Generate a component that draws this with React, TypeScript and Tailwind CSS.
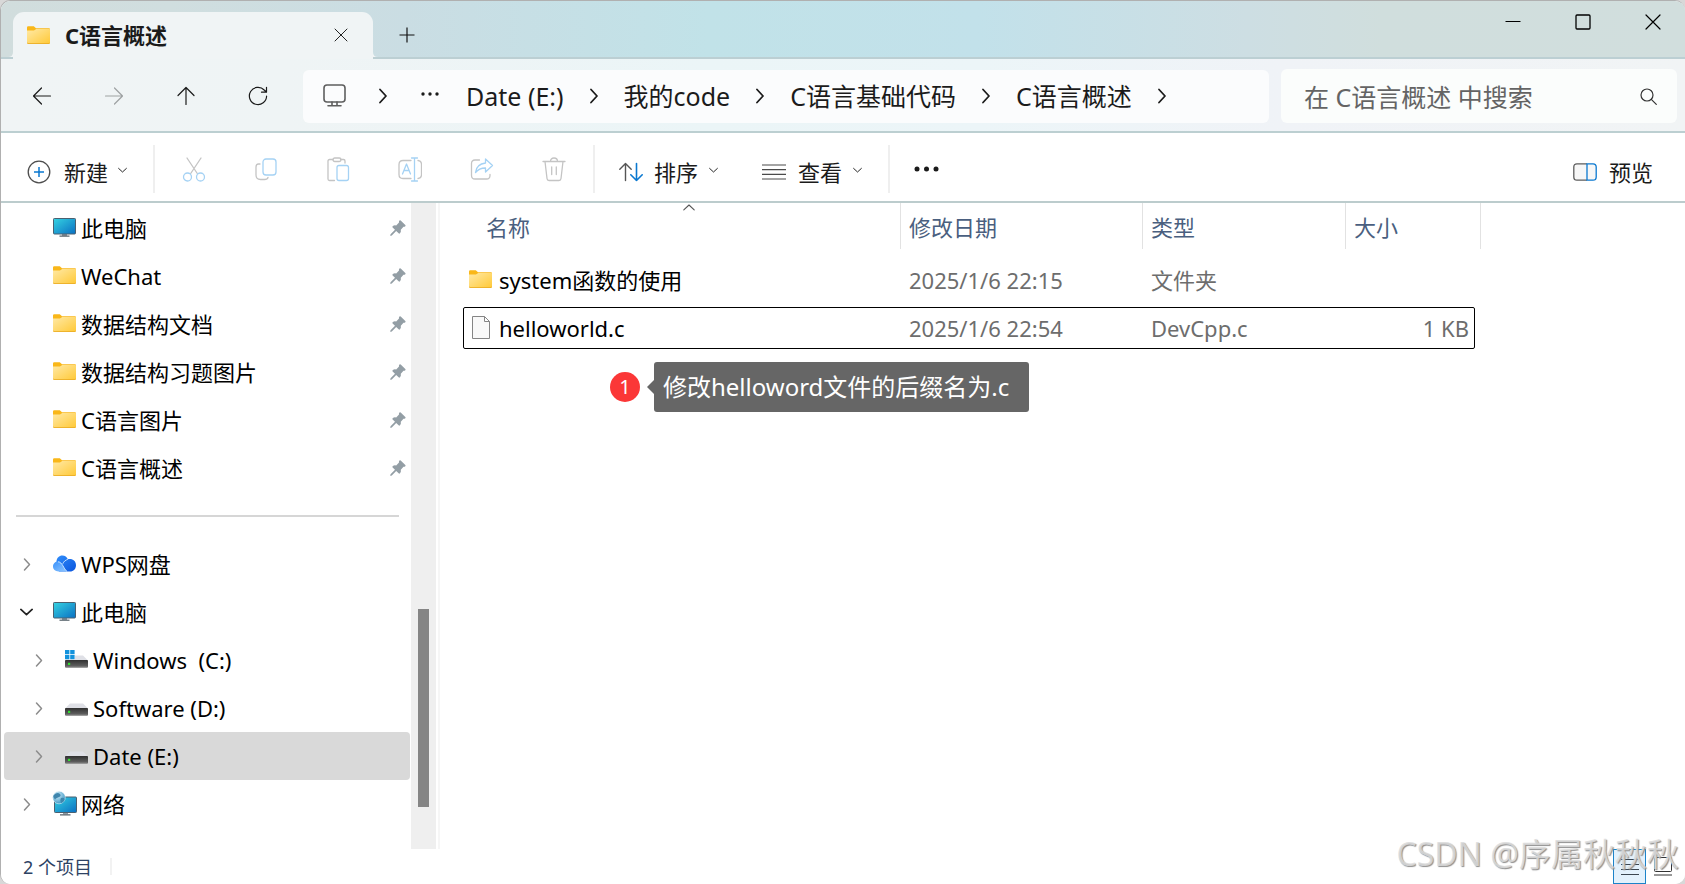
import React from "react";

type IconProps = { className?: string };

const stroke = {
  fill: "none",
  strokeLinecap: "round" as const,
  strokeLinejoin: "round" as const,
};

function FolderIcon({ className = "h-[18px] w-[23px]" }: IconProps) {
  return (
    <svg viewBox="0 0 23 18" className={className} aria-hidden="true">
      <defs>
        <linearGradient id="folder" x1="0" y1="0" x2="1" y2="1">
          <stop offset="0" stopColor="#ffe9a6" />
          <stop offset="1" stopColor="#ffc937" />
        </linearGradient>
      </defs>
      <path d="M0 1.500Q0 .3 1.200 .3H6.800L9 2.200H22Q23 2.200 23 3.200V8H0Z" fill="#f9b719" />
      <path d="M0 4.600H7L9.200 3H22.400Q23 3 23 3.600V16.600Q23 17.700 22 17.700H1Q0 17.700 0 16.600Z" fill="url(#folder)" />
      <path d="M0 16.200V16.700Q0 17.800 1 17.800H22Q23 17.800 23 16.700V16.200Q23 17 22 17H1Q0 17 0 16.200Z" fill="#e9a512" />
    </svg>
  );
}

function MonitorIcon() {
  return (
    <svg viewBox="0 0 23 19" className="h-[19px] w-[23px]" aria-hidden="true">
      <defs>
        <linearGradient id="screen" x1="0" y1="0" x2="1" y2="1">
          <stop offset="0" stopColor="#35d3e2" />
          <stop offset="1" stopColor="#0a6fc2" />
        </linearGradient>
      </defs>
      <path d="M9 16H14V18H9Z" fill="#8e99a1" />
      <path d="M6.500 17.600H16.500V18.800H6.500Z" fill="#56626b" />
      <rect x=".5" y=".5" width="22" height="15.500" rx=".8" fill="url(#screen)" stroke="#4b6070" />
    </svg>
  );
}

function CloudIcon() {
  return (
    <svg viewBox="0 0 23 17" className="h-[17px] w-[23px]" aria-hidden="true">
      <defs>
        <linearGradient id="cloudA" x1="0" y1="0" x2="1" y2="1">
          <stop offset="0" stopColor="#2f8dfb" />
          <stop offset="1" stopColor="#0b55dd" />
        </linearGradient>
        <linearGradient id="cloudB" x1="0" y1="0" x2="1" y2="1">
          <stop offset="0" stopColor="#3b93fb" />
          <stop offset="1" stopColor="#8fc6ff" />
        </linearGradient>
      </defs>
      <path d="M3.500 7C3.500 2.800 6.200 .5 9.300 .5C12 .5 14 2 14.800 4.300C19.500 3.300 23 6 23 10.200C23 14 20.500 16.500 17 16.500H6Z" fill="url(#cloudA)" />
      <path d="M5.500 16.500C2.300 16.500 0 14.500 0 11.600C0 8.700 2.200 6.600 5 6.600C10 6.600 10.500 14.500 14.500 16.500Z" fill="url(#cloudB)" />
      <path d="M5 6.800C9.500 7 10.600 14 14 16.400M14.800 4.400C12.500 5 10.700 6.500 9.800 8.800" stroke="#cfe6ff" strokeWidth=".9" fill="none" />
    </svg>
  );
}

function DriveIcon({ system = false }: { system?: boolean }) {
  return (
    <svg viewBox="0 0 23 19" className="h-[19px] w-[23px]" aria-hidden="true">
      <defs>
        <linearGradient id="drive" x1="0" y1="0" x2="0" y2="1">
          <stop offset="0" stopColor="#303030" />
          <stop offset="1" stopColor="#6a6a6a" />
        </linearGradient>
      </defs>
      <path d="M5 5.500H18L22.500 10H.5Z" fill="#dfe0e6" />
      <rect x="0" y="10" width="23" height="7.500" rx=".8" fill="url(#drive)" />
      <path d="M.5 17.200H22.500" stroke="#909090" />
      <rect x="3" y="12.800" width="2.200" height="2.200" fill="#2fe02f" />
      {system && (
        <>
          <path d="M0 0H10V9.500H0Z" fill="#fff" />
          <path d="M0 0H4.400V4.200H0ZM5.200 0H9.600V4.200H5.200ZM0 5H4.400V9.200H0ZM5.200 5H9.600V9.200H5.200Z" fill="#1392dc" />
        </>
      )}
    </svg>
  );
}

function NetworkIcon() {
  return (
    <svg viewBox="0 0 25 25" className="-mx-px h-[25px] w-[25px]" aria-hidden="true">
      <defs>
        <radialGradient id="globe" cx=".35" cy=".3" r=".8">
          <stop offset="0" stopColor="#d8f1fb" />
          <stop offset="1" stopColor="#2f8fc0" />
        </radialGradient>
      </defs>
      <path d="M11 21H16V23.500H11Z" fill="#8e99a1" />
      <path d="M8 23.200H18.500V24.400H8Z" fill="#56626b" />
      <rect x="2.500" y="6" width="22" height="15.500" rx=".8" fill="url(#screen)" stroke="#4b6070" />
      <circle cx="7" cy="6.500" r="6.300" fill="url(#globe)" stroke="#fff" strokeWidth=".5" />
      <path d="M3 3Q6 1 8 3T6 6.500T3.500 9Q1.500 7 1.200 5ZM9 7Q12 6 12.500 8T9.500 12Q7.500 10 9 7Z" fill="#3f86ad" />
    </svg>
  );
}

function PinIcon() {
  return (
    <svg viewBox="0 0 16 16" className="h-4 w-4" fill="#939ea5" aria-hidden="true">
      <path d="M9.400 .6Q10 0 10.700 .6L15.300 4.900Q16 5.600 15.300 6.200Q14.500 7 13.500 6.800L10.800 9.800Q11.300 12 10 13.300Q9.300 14 8.600 13.300L6.200 11L1.800 15.500L.3 15.900L.5 14.300L5 9.800L2.600 7.500Q2 6.800 2.700 6.200Q4 5 6.200 5.500L9 2.600Q8.700 1.400 9.400 .6Z" />
    </svg>
  );
}

function Chevron({ dir, className }: { dir: "right" | "down" | "up"; className: string }) {
  const d = { right: "M3 1L9 7.500L3 14", down: "M1 4L7.500 10L14 4", up: "M1 11L7.500 5L14 11" }[dir];
  return (
    <svg viewBox={dir === "right" ? "0 0 12 15" : "0 0 15 15"} className={className} {...stroke} stroke="currentColor" aria-hidden="true">
      <path d={d} />
    </svg>
  );
}

function FileIcon() {
  return (
    <svg viewBox="0 0 18 23" className="h-[23px] w-[18px]" fill="#f9f9f9" stroke="#858585" aria-hidden="true">
      <path d="M.5 .5H12.500L17.500 5.500V22.500H.5ZM12.500 .5V5.500H17.500" />
    </svg>
  );
}

function TitleBar() {
  return (
    <header className="flex h-[58px] items-end border-b-2 border-[#bccfd3] bg-[linear-gradient(90deg,#d1dddd_0%,#d0dedf_10%,#cadde3_24%,#c1e2e8_42%,#c2e1ea_58%,#cddee3_74%,#d0dedd_82%,#d1dedd_100%)] pl-3">
      <div className="relative -mb-0.5 flex h-[47px] w-[360px] items-center rounded-t-[11px] bg-[#f0f4f5] pr-6 pb-0.5 pl-3.5">
        <svg viewBox="0 0 5 5" className="absolute bottom-0.5 -left-[5px] h-[5px] w-[5px]" aria-hidden="true">
          <path d="M5 0V5H0Q5 5 5 0Z" fill="#f0f4f5" />
        </svg>
        <svg viewBox="0 0 5 5" className="absolute -right-[5px] bottom-0.5 h-[5px] w-[5px]" aria-hidden="true">
          <path d="M0 0V5H5Q0 5 0 0Z" fill="#f0f4f5" />
        </svg>
        <FolderIcon />
        <h1 className="ml-[15px] flex-1 text-[22px] leading-8 font-bold">C语言概述</h1>
        <button aria-label="关闭标签页" className="p-px">
          <svg viewBox="0 0 14 14" className="h-3.5 w-3.5" {...stroke} stroke="#222">
            <path d="M1 1L13 13M13 1L1 13" />
          </svg>
        </button>
      </div>
      <button aria-label="新建标签页" className="mb-3.5 ml-[26px]">
        <svg viewBox="0 0 16 16" className="h-4 w-4" stroke="#111" strokeWidth="1.2">
          <path d="M8 .5V15.500M.5 8H15.500" />
        </svg>
      </button>
      <div className="ml-auto flex gap-[54px] self-start pt-[13px] pr-6">
        <button aria-label="最小化">
          <svg viewBox="0 0 16 16" className="h-4 w-4" stroke="#000">
            <path d="M.5 7.500H15.500" />
          </svg>
        </button>
        <button aria-label="最大化">
          <svg viewBox="0 0 16 16" className="h-4 w-4" fill="none" stroke="#000" strokeWidth="1.300">
            <rect x="1" y="1" width="14" height="14" rx="1" />
          </svg>
        </button>
        <button aria-label="关闭">
          <svg viewBox="0 0 16 16" className="h-4 w-4" {...stroke} stroke="#000" strokeWidth="1.200">
            <path d="M1 1L15 15M15 1L1 15" />
          </svg>
        </button>
      </div>
    </header>
  );
}

const crumbs = ["Date (E:)", "我的code", "C语言基础代码", "C语言概述"];

function NavBar() {
  return (
    <nav className="flex items-center border-b-2 border-[#bccfd1] bg-[linear-gradient(90deg,#f0f4f5_0%,#eff4f5_17%,#ebf5f7_42%,#ecf5f8_58%,#f0f3f7_76%,#f1f4f5_100%)] pt-2.5 pr-2 pb-2 pl-[31px]">
      <div className="flex w-[271px] shrink-0 gap-[52px]">
        <button aria-label="后退">
          <svg viewBox="0 0 20 20" className="h-5 w-5" {...stroke} stroke="#1a1a1a" strokeWidth="1.200">
            <path d="M18.500 10H1.500M9.500 2L1.500 10L9.500 18" />
          </svg>
        </button>
        <button aria-label="前进">
          <svg viewBox="0 0 20 20" className="h-5 w-5" {...stroke} stroke="#9da1a2" strokeWidth="1.200">
            <path d="M1.500 10H18.500M10.500 2L18.500 10L10.500 18" />
          </svg>
        </button>
        <button aria-label="向上">
          <svg viewBox="0 0 20 20" className="h-5 w-5" {...stroke} stroke="#1a1a1a" strokeWidth="1.200">
            <path d="M10 18.500V1.500M2 9.500L10 1.500L18 9.500" />
          </svg>
        </button>
        <button aria-label="刷新">
          <svg viewBox="0 0 20 20" className="h-5 w-5" {...stroke} stroke="#1a1a1a" strokeWidth="1.200">
            <path d="M18.600 10A8.600 8.600 0 1 1 16.200 4L18.400 6M18.500 1.300V6.200H13.500" />
          </svg>
        </button>
      </div>
      <div className="flex h-[53px] min-w-0 flex-1 items-center overflow-hidden rounded-md bg-[#fbfcfd] pl-5 text-[25px] leading-9 whitespace-nowrap text-[#1b1b1b]">
        <svg viewBox="0 0 23 23" className="mb-0.5 h-[23px] w-[23px] shrink-0" {...stroke} stroke="#5e5e5e" strokeWidth="1.600" aria-hidden="true">
          <rect x="1" y="1" width="21" height="17" rx="3" />
          <path d="M9 18V21.500M14 18V21.500M5 21.700H18" />
        </svg>
        <Chevron dir="right" className="ml-[31px] h-4 w-3 stroke-[1.8]" />
        <button aria-label="更多路径" className="mb-1 ml-8">
          <svg viewBox="0 0 18 4" className="h-1 w-[18px]" fill="#1b1b1b">
            <circle cx="2" cy="2" r="1.700" />
            <circle cx="9" cy="2" r="1.700" />
            <circle cx="16" cy="2" r="1.700" />
          </svg>
        </button>
        <ol className="flex pl-[27px]">
          {crumbs.map((name) => (
            <li key={name} className="flex items-center">
              <a href="#">{name}</a>
              <Chevron dir="right" className="mx-6 h-4 w-3 stroke-[1.8]" />
            </li>
          ))}
        </ol>
      </div>
      <label className="ml-3 flex h-[54px] w-[396px] shrink-0 items-center rounded-md bg-[#fbfdfc] pr-5 pl-[23px]">
        <input
          type="text"
          aria-label="搜索"
          placeholder="在 C语言概述 中搜索"
          className="min-w-0 flex-1 bg-transparent pt-0.5 text-[25px] leading-9 outline-none placeholder:text-[#646464]"
        />
        <svg viewBox="0 0 17 17" className="h-[17px] w-[17px]" {...stroke} stroke="#333" strokeWidth="1.200" aria-hidden="true">
          <circle cx="7" cy="7" r="6" />
          <path d="M11.300 11.300L16.300 16.300" />
        </svg>
      </label>
    </nav>
  );
}

const B = "#a5d2f4";
const G = "#c4c4c4";

const editTools: { name: string; art: React.ReactNode }[] = [
  {
    name: "剪切",
    art: (
      <>
        <path d="M5 1L15.300 16.500M19 1L8.700 16.500" stroke={G} />
        <circle cx="5.500" cy="20" r="4" stroke={B} />
        <circle cx="18.500" cy="20" r="4" stroke={B} />
      </>
    ),
  },
  {
    name: "复制",
    art: (
      <>
        <path d="M6 7H4.500Q2 7 2 10V18Q2 22.500 6.500 22.500H10.500Q13.500 22.500 14 20.500" stroke={G} />
        <rect x="9" y="2" width="13" height="16" rx="3" stroke={B} />
      </>
    ),
  },
  {
    name: "粘贴",
    art: (
      <>
        <path d="M7 2.500H3.500Q2 2.500 2 4V22Q2 23.500 3.500 23.500H8.500M14.500 2.500H17.500Q19 2.500 19 4V6" stroke={G} />
        <rect x="7" y="1" width="8" height="3.500" rx="1.700" stroke={G} />
        <rect x="11" y="8.500" width="11.500" height="15" rx="2" stroke={B} />
      </>
    ),
  },
  {
    name: "重命名",
    art: (
      <>
        <path d="M13 3.500H5Q1 3.500 1 7.500V17.500Q1 21.500 5 21.500H13M20 3.500Q23.500 4 23.500 7.500V17.500Q23.500 21 20 21.500" stroke={G} />
        <path d="M13.500 1H19.500M16.500 1V24M13.500 24H19.500M4.500 17L8.500 7L12.500 17M6 13.500H11" stroke={B} />
      </>
    ),
  },
  {
    name: "共享",
    art: (
      <>
        <path d="M9.500 3H5Q1.500 3 1.500 6.500V18.500Q1.500 22 5 22H16.500Q20 22 20 18.500V17.500" stroke={G} />
        <path d="M15.500 2L22.500 8.500L15.500 15V11Q9 11 5.500 15.500Q6.500 7 15.500 6Z" stroke={B} />
      </>
    ),
  },
  {
    name: "删除",
    art: <path d="M1 4.500H23M8.500 4.500Q8.500 1 12 1T15.500 4.500M3 4.500L5 21.500Q5.200 23.500 7 23.500H17Q18.800 23.500 19 21.500L21 4.500M9.700 10V17.500M14.300 10V17.500" stroke={G} />,
  },
];

function Divider() {
  return <span className="h-12 w-0.5 shrink-0 bg-[#efefef]" />;
}

function Toolbar() {
  return (
    <div role="toolbar" className="flex h-[70px] items-center border-b-2 border-[#bccccd] bg-white pt-1 pr-8 pl-[26px] text-[22px] leading-8 whitespace-nowrap text-[#1b1b1b]">
      <button className="flex items-center pt-1.5">
        <svg viewBox="0 0 24 24" className="h-6 w-6" fill="none" aria-hidden="true">
          <circle cx="12" cy="12" r="10.800" stroke="#4d4d4d" strokeWidth="1.300" />
          <path d="M12 7V17M7 12H17" stroke="#0a78d0" strokeWidth="1.500" />
        </svg>
        <span className="ml-[13px]">新建</span>
        <Chevron dir="down" className="mb-1 ml-2.5 h-[9px] w-[9px] stroke-[1.6]" />
      </button>
      <span className="w-[26px]" />
      <Divider />
      <div className="flex gap-12 px-[27px]">
        {editTools.map((t) => (
          <button key={t.name} disabled aria-label={t.name}>
            <svg viewBox="0 0 24 25" className="h-[25px] w-6" {...stroke} strokeWidth="1.300">
              {t.art}
            </svg>
          </button>
        ))}
      </div>
      <Divider />
      <button className="ml-6 flex items-center pt-1.5">
        <svg viewBox="0 0 24 20" className="h-5 w-6" {...stroke} strokeWidth="1.400" aria-hidden="true">
          <path d="M6.500 18.500V1.500M.8 7.200L6.500 1.500L12.200 7.200" stroke="#555" />
          <path d="M17.500 1.500V18.500M11.800 12.800L17.500 18.500L23.200 12.800" stroke="#0a78d0" strokeWidth="1.600" />
        </svg>
        <span className="ml-[11px]">排序</span>
        <Chevron dir="down" className="mb-1 ml-[11px] h-[9px] w-[9px] stroke-[1.6]" />
      </button>
      <button className="ml-11 flex items-center pt-1.5">
        <svg viewBox="0 0 24 16" className="h-4 w-6" stroke="#4a4a4a" strokeWidth="1.200" aria-hidden="true">
          <path d="M0 1H24M0 5.600H24M0 10.300H24M0 15H24" />
        </svg>
        <span className="ml-3">查看</span>
        <Chevron dir="down" className="mb-1 ml-[11px] h-[9px] w-[9px] stroke-[1.6]" />
      </button>
      <span className="w-[26px]" />
      <Divider />
      <button aria-label="查看更多" className="ml-6">
        <svg viewBox="0 0 25 6" className="h-1.5 w-[25px]" fill="#1b1b1b">
          <circle cx="3" cy="3" r="2.500" />
          <circle cx="12.500" cy="3" r="2.500" />
          <circle cx="22" cy="3" r="2.500" />
        </svg>
      </button>
      <button className="ml-auto flex items-center pt-1.5">
        <svg viewBox="0 0 24 18" className="h-[18px] w-6" fill="#f7f7f7" strokeWidth="1.300" aria-hidden="true">
          <path d="M14 .8H4Q.8 .8 .8 4V14Q.8 17.200 4 17.200H14" stroke="#5c5c5c" />
          <path d="M14 .8H20Q23.200 .8 23.200 4V14Q23.200 17.200 20 17.200H14Z" stroke="#0a78d0" />
        </svg>
        <span className="ml-3">预览</span>
      </button>
    </div>
  );
}

const pinned = [
  { name: "此电脑", icon: <MonitorIcon /> },
  { name: "WeChat", icon: <FolderIcon /> },
  { name: "数据结构文档", icon: <FolderIcon /> },
  { name: "数据结构习题图片", icon: <FolderIcon /> },
  { name: "C语言图片", icon: <FolderIcon /> },
  { name: "C语言概述", icon: <FolderIcon /> },
];

type TreeNode = { name: string; icon: React.ReactNode; nested?: boolean; open?: boolean; selected?: boolean };

const tree: TreeNode[] = [
  { name: "WPS网盘", icon: <CloudIcon /> },
  { name: "此电脑", icon: <MonitorIcon />, open: true },
  { name: "Windows  (C:)", icon: <DriveIcon system />, nested: true },
  { name: "Software (D:)", icon: <DriveIcon />, nested: true },
  { name: "Date (E:)", icon: <DriveIcon />, nested: true, selected: true },
  { name: "网络", icon: <NetworkIcon /> },
];

function Sidebar() {
  return (
    <aside className="flex w-[439px] shrink-0 border-r-2 border-[#f6f6f6] text-[22px] leading-8 whitespace-pre text-black">
      <div className="min-w-0 flex-1 pt-px pr-px pl-[3px]">
        <ul>
          {pinned.map((p) => (
            <li key={p.name} className="flex h-12 items-center pr-1 pl-[49px]">
              <span className="mb-0.5">{p.icon}</span>
              <a href="#" className="ml-[5px] flex-1">{p.name}</a>
              <PinIcon />
            </li>
          ))}
        </ul>
        <div className="flex h-12 items-center pr-[11px] pl-3">
          <hr className="flex-1 border-t-2 border-[#d6d6d6]" />
        </div>
        <ul>
          {tree.map((n) => (
            <li
              key={n.name}
              className={
                "flex h-12 items-center rounded-sm " +
                (n.nested ? "pl-7 " : "pl-4 ") +
                (n.selected ? "bg-[#d9d9d9]" : "")
              }
            >
              <button aria-label={n.open ? "折叠" : "展开"} className="flex w-[33px] shrink-0">
                {n.open ? (
                  <Chevron dir="down" className="h-[13px] w-[13px] stroke-2 text-[#222]" />
                ) : (
                  <Chevron dir="right" className="ml-0.5 h-[13px] w-2.5 stroke-[1.8] text-[#8c8c8c]" />
                )}
              </button>
              <span className="mb-0.5">{n.icon}</span>
              <a href="#" className="ml-[5px]">{n.name}</a>
            </li>
          ))}
        </ul>
      </div>
      <div className="flex w-[25px] shrink-0 flex-col bg-[#efefef] px-[7px]">
        <div className="flex-[406]" />
        <div className="flex-[198] bg-[#858585]" />
        <div className="flex-[42]" />
      </div>
      <div className="w-0.5" />
    </aside>
  );
}

const columns = [
  { name: "名称", width: "w-[438px]", pad: "pl-[23px]" },
  { name: "修改日期", width: "w-[242px]", pad: "pl-2" },
  { name: "类型", width: "w-[203px]", pad: "pl-2" },
  { name: "大小", width: "w-[135px]", pad: "pl-2" },
];

const files = [
  { name: "system函数的使用", date: "2025/1/6 22:15", type: "文件夹", size: "", icon: <FolderIcon />, focus: false },
  { name: "helloworld.c", date: "2025/1/6 22:54", type: "DevCpp.c", size: "1 KB", icon: <FileIcon />, focus: true },
];

function FileList() {
  return (
    <main className="min-w-0 flex-1 bg-white pl-[23px]">
      <table className="w-[1018px] table-fixed border-separate border-spacing-0 text-left text-[22px] leading-8">
        <thead>
          <tr className="h-[46px]">
            {columns.map((c) => (
              <th key={c.name} className={"relative border-r border-[#e2e2e2] pt-0.5 font-normal text-[#4a5f7f] " + c.width + " " + c.pad}>
                {c.name}
                {c.name === "名称" && <Chevron dir="up" className="absolute -top-0.5 left-[220px] h-3 w-3 stroke-[1.4] text-[#555]" />}
              </th>
            ))}
          </tr>
          <tr className="h-2.5" />
        </thead>
        <tbody>
          {files.map((f) => (
            <tr
              key={f.name}
              className={
                "relative h-12 text-[#6d6d6d] *:pb-1.5 " +
                (f.focus ? "after:absolute after:top-0 after:right-1.5 after:left-0 after:h-[42px] after:rounded-xs after:border after:border-black" : "")
              }
            >
              <td className="pl-1.5">
                <div className="flex items-center text-black">
                  <span className="flex w-[23px] justify-center pb-0.5">{f.icon}</span>
                  <span className="ml-[7px]">{f.name}</span>
                </div>
              </td>
              <td className="pl-2">{f.date}</td>
              <td className="pl-2">{f.type}</td>
              <td className="pr-3 text-right">{f.size}</td>
            </tr>
          ))}
        </tbody>
      </table>
      <div className="flex items-center pt-[7px] pl-[147px]">
        <span className="flex size-[30px] items-center justify-center rounded-full bg-[#fb3737] text-[20px] leading-none text-white">1</span>
        <span className="ml-[7px] border-y-[7px] border-r-[7px] border-y-transparent border-r-[#666]" />
        <p className="rounded-[3px] bg-[#666] py-[7px] pr-5 pl-[9px] text-[24px] leading-9 text-white">修改helloword文件的后缀名为.c</p>
      </div>
    </main>
  );
}

function StatusBar() {
  return (
    <footer className="relative flex h-[35px] items-center bg-white pl-[22px] text-[18px] leading-7 text-[#2d4263]">
      <span>2 个项目</span>
      <span className="ml-[18px] h-[17px] w-0.5 bg-[#f2f2f2]" />
      <button aria-label="详细信息" className="ml-auto flex h-[35px] w-[33px] items-center justify-center border border-[#1c83c9] bg-[#e3f1fc]">
        <svg viewBox="0 0 18 18" className="h-[18px] w-[18px]" stroke="#3c4650" aria-hidden="true">
          <path d="M0 1.500H18M0 6.500H18M0 11.500H18M0 16.500H18" />
        </svg>
      </button>
      <button aria-label="大缩略图" className="mr-[13px] ml-2">
        <svg viewBox="0 0 18 19" className="h-[19px] w-[18px]" fill="none" stroke="#333" aria-hidden="true">
          <rect x=".5" y=".5" width="17" height="14" rx="1" />
          <path d="M0 18H18" />
        </svg>
      </button>
      <span className="pointer-events-none absolute right-1.5 bottom-2 text-[32px] leading-[44px] text-[#dcdcdc]/85 [text-shadow:1px_1px_1px_#8f8f8f]">CSDN @序属秋秋秋</span>
    </footer>
  );
}

export default function App() {
  return (
    <div className="flex min-h-screen flex-col bg-[#d8d8d8] font-['Noto_Sans','Noto_Sans_CJK_SC',sans-serif]">
      <div className="flex flex-1 flex-col overflow-hidden rounded-[10px] border-t border-l border-[#b0b0b0] bg-white text-[#1b1b1b]">
        <TitleBar />
        <NavBar />
        <Toolbar />
        <div className="flex flex-1">
          <Sidebar />
          <FileList />
        </div>
        <StatusBar />
      </div>
    </div>
  );
}
